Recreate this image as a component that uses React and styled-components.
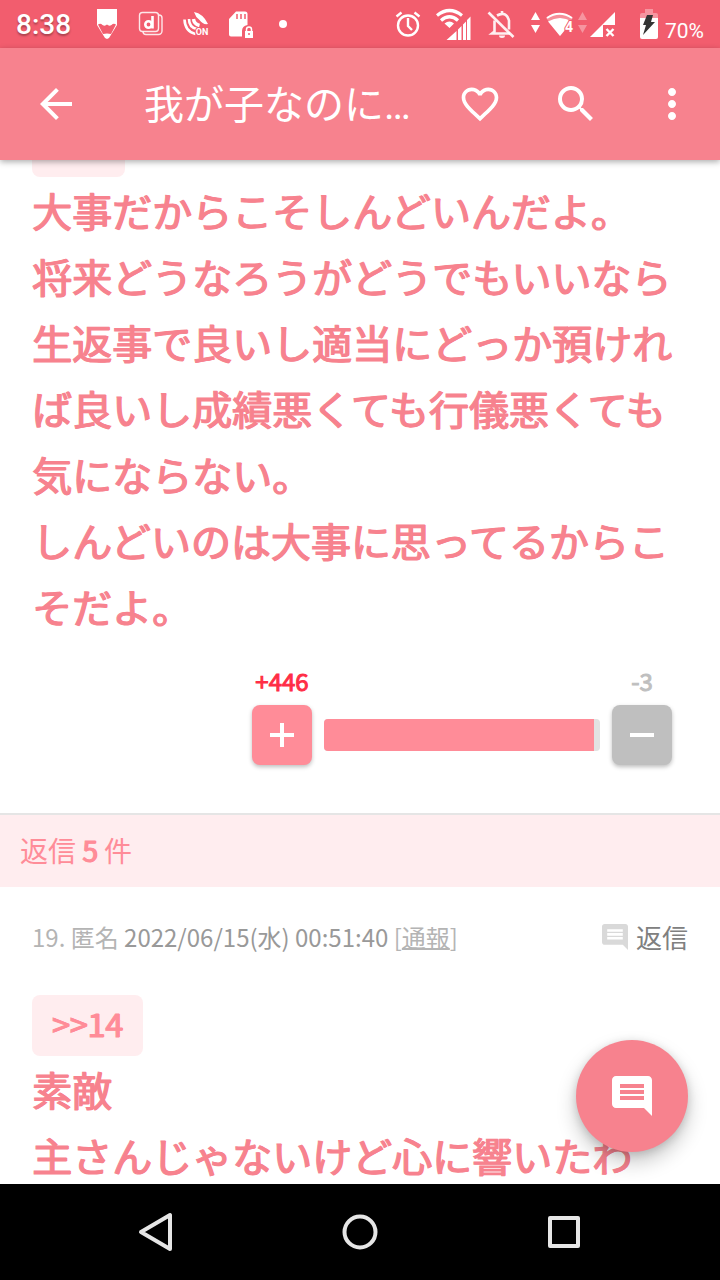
import styled, { createGlobalStyle, css } from "styled-components";
import {
  MdArrowBack,
  MdComment,
  MdFavoriteBorder,
  MdMoreVert,
  MdSearch,
} from "react-icons/md";

const GlobalStyle = createGlobalStyle`
  * {
    box-sizing: border-box;
  }
  body {
    margin: 0;
    background: #fff;
    font-family: "Noto Sans CJK JP", sans-serif;
  }
  button {
    margin: 0;
    padding: 0;
    border: 0;
    background: none;
    color: inherit;
    font: inherit;
    cursor: pointer;
  }
`;

/* thickens the regular weight without changing its widths */
const heavy = css`
  -webkit-text-stroke: 1px;
  text-shadow: 1px 0 0 currentColor;
`;

const Screen = styled.div`
  display: flex;
  flex-direction: column;
  height: 100vh;
`;

/* ---------- status bar ---------- */

const StatusBar = styled.div`
  display: flex;
  align-items: center;
  flex-shrink: 0;
  height: 48px;
  padding: 0 16px;
  background: #f25d6e;
  color: #fff;
  font-family: Roboto, sans-serif;
`;
const Clock = styled.time`
  width: 69px;
  padding-top: 2px;
  font-size: 28px;
  font-weight: 500;
  line-height: 48px;
  text-shadow: 0 2px 2px rgba(0, 0, 0, 0.3);
`;
const StatusGroup = styled.div`
  display: flex;
  margin-right: ${(p) => (p.$push ? "auto" : "0")};
`;
const Glyph = styled.svg`
  display: block;
  width: ${(p) => p.$w}px;
  height: 48px;
  fill: #fff;
`;
const Percent = styled.span`
  padding: 14px 0 0 3px;
  font-size: 21px;
  line-height: 34px;
`;

/* ---------- app bar ---------- */

const AppBar = styled.header`
  position: relative;
  z-index: 1;
  display: flex;
  align-items: center;
  flex-shrink: 0;
  height: 112px;
  background: #f7828e;
  color: #fff;
  box-shadow: 0 2px 6px rgba(0, 0, 0, 0.32);
`;
const IconButton = styled.button`
  display: flex;
  align-items: center;
  justify-content: center;
  flex-shrink: 0;
  width: ${(p) => p.$w || 96}px;
  height: 112px;
`;
const Title = styled.h1`
  flex: 1;
  margin: 0;
  padding: 4px 0 0 32px;
  font-family: Roboto, "Noto Sans CJK JP", sans-serif;
  font-size: 40px;
  font-weight: 400;
  line-height: 60px;
  white-space: nowrap;
`;

/* ---------- thread ---------- */

const Stage = styled.div`
  position: relative;
  flex: 1;
  min-height: 0;
`;
const Feed = styled.main`
  height: 100%;
  overflow: hidden;
`;
const Post = styled.article`
  padding: 0 32px;
`;
const QuoteEdge = styled.div`
  width: 93px;
  height: 17px;
  border-radius: 0 0 8px 8px;
  background: #ffedef;
`;
const Quote = styled.a`
  display: block;
  width: fit-content;
  padding: 0 20px 4px;
  border-radius: 8px;
  background: #ffedef;
  color: #ff8c98;
  font-size: 32px;
  line-height: 57px;
  text-decoration: none;
  ${heavy}
`;
const Body = styled.p`
  margin: 0;
  padding-bottom: 2px;
  color: #f7828e;
  font-size: 40px;
  line-height: 66px;
  ${heavy}
`;
const Votes = styled.div`
  display: grid;
  grid-template-columns: 60px 1fr 60px;
  column-gap: 12px;
  row-gap: 8px;
  align-items: center;
  width: 436px;
  max-width: 100%;
  margin-left: auto;
  padding: 24px 16px 48px 0;
`;
const Count = styled.span`
  color: ${(p) => p.$color};
  font-size: 24px;
  line-height: 32px;
  text-align: center;
  white-space: nowrap;
  -webkit-text-stroke: 1px;
`;
const VoteButton = styled.button`
  display: flex;
  align-items: center;
  justify-content: center;
  width: 60px;
  height: 60px;
  border-radius: 8px;
  background: ${(p) => p.$color};
  box-shadow: 0 2px 4px rgba(0, 0, 0, 0.26);
`;
const Track = styled.div`
  height: 32px;
  border-radius: 4px;
  overflow: hidden;
  background: #e2e2e2;
`;
const Fill = styled.div`
  width: ${(p) => p.$percent}%;
  height: 100%;
  background: #ff8c98;
`;
const ReplyBand = styled.h2`
  margin: 0;
  padding: 0 20px 2px;
  border-top: 2px solid #e5e5e5;
  background: #ffedef;
  color: #ff8c98;
  font-size: 28px;
  font-weight: 400;
  line-height: 70px;
`;
const Strong = styled.span`
  ${heavy}
`;
const Meta = styled.div`
  display: flex;
  align-items: center;
  justify-content: space-between;
  height: 108px;
  padding-bottom: 8px;
  color: #b4b4b4;
  font-size: 24px;
  line-height: 36px;
`;
const Posted = styled.time`
  color: #999;
`;
const Report = styled.a`
  color: inherit;
  text-decoration: underline;
  text-decoration-thickness: 2px;
`;
const ReplyButton = styled.button`
  display: flex;
  align-items: center;
  gap: 8px;
  color: #808080;
  font-size: 26px;

  svg {
    color: #d9d9d9;
  }
`;
const Fab = styled.button`
  position: absolute;
  right: 32px;
  bottom: 32px;
  display: flex;
  align-items: center;
  justify-content: center;
  width: 112px;
  height: 112px;
  border-radius: 50%;
  background: #f7828e;
  color: #fff;
  box-shadow: 0 10px 20px rgba(0, 0, 0, 0.22), 0 2px 8px rgba(0, 0, 0, 0.14);
`;

/* ---------- navigation bar ---------- */

const NavBar = styled.nav`
  display: flex;
  flex-shrink: 0;
  height: 96px;
  padding: 0 54px;
  background: #000;
`;
const NavButton = styled.button`
  display: flex;
  flex: 1;
  align-items: center;
  justify-content: center;

  svg {
    fill: none;
    stroke: #e6e6e6;
    stroke-width: 4;
    stroke-linejoin: round;
  }
`;

const LeftIcons = () => (
  <StatusGroup $push>
    <Glyph $w={44} viewBox="0 0 44 48">
      <path d="M12 9h20v16L24 38l-2 1-2-1-8-13z" />
      <path
        d="M13 24.500q2.500-1.500 4.500 0.500q2.500 1.500 4.500-0.500q2 2 4.500 0.500q2-2 4.500-0.500L26 34q-4-1-8 0z"
        fill="#f25d6e"
      />
    </Glyph>
    <Glyph $w={44} viewBox="0 0 44 48">
      <g fill="none" stroke="#fff" strokeOpacity="0.85" strokeWidth="1.4">
        <rect x="10.500" y="12.500" width="19" height="19" rx="3" />
        <path d="M30 15a3 3 0 0 1 3 3v13a3.500 3.500 0 0 1-3.500 3.500H17a3 3 0 0 1-3-3" />
      </g>
      <g fill="none" stroke="#fff" strokeWidth="2.600">
        <circle cx="19.500" cy="24.500" r="3.200" />
        <path d="M23.500 16v12.500" />
      </g>
    </Glyph>
    <Glyph $w={44} viewBox="0 0 44 48">
      <g fill="none" stroke="#fff" strokeWidth="2.600">
        <path d="M11.500 19.500Q12 31.500 22.500 34" />
        <path d="M16 19Q16 27.500 24 29" />
        <path d="M20.500 19Q21 24 26.500 25.500" strokeWidth="3.400" />
      </g>
      <path d="M21 12q9 1.500 14 12q-5 1-8.500-4q-4-3-5.500-8z" />
      <text
        x="29"
        y="35"
        fontSize="9"
        fontWeight="700"
        textAnchor="middle"
        stroke="#f25d6e"
        strokeWidth="2"
        paintOrder="stroke"
      >
        ON
      </text>
    </Glyph>
    <Glyph $w={44} viewBox="0 0 44 48">
      <path d="M19 11.500h9q2.500 0 2.500 2.500v11q-5.500 1-5.500 6v5.500H14q-2 0-2-2V19z" />
      <path
        d="M20 14v5M24 14v5M28 14v5"
        stroke="#f25d6e"
        strokeWidth="1.5"
      />
      <path d="M28 31h8v7h-8z" />
      <path
        d="M29.500 31v-1.500a2.500 2.500 0 0 1 5 0V31"
        fill="none"
        stroke="#fff"
        strokeWidth="1.5"
      />
      <circle cx="32" cy="34" r="1" fill="#f25d6e" />
    </Glyph>
    <Glyph $w={44} viewBox="0 0 44 48">
      <circle cx="22" cy="24" r="4" />
    </Glyph>
  </StatusGroup>
);

const RightIcons = () => (
  <StatusGroup>
    <Glyph $w={44} viewBox="0 0 44 48">
      <g fill="none" stroke="#fff" strokeWidth="2.4">
        <circle cx="22" cy="25.500" r="10" />
        <path d="M22 18v8l4 4M10.500 16.500l5-4M33.500 16.500l-5-4" />
      </g>
    </Glyph>
    <Glyph $w={48} viewBox="0 0 48 48">
      <g fill="none" stroke="#fff" strokeWidth="3.2">
        <path d="M7 15.500q12.500-10 25 0" />
        <path d="M11 20.500q8.500-7.500 17 0" />
      </g>
      <path d="M14.500 23.500q5-4 9.500 0L19.500 28zM16.500 40L26.500 31v9zM28 29.500l3.500-3.500v14H28zM33 24.500l3-3V40h-3zM37 20l3.500-3.500V40H37z" />
    </Glyph>
    <Glyph $w={44} viewBox="0 0 44 48">
      <g fill="none" stroke="#fff" strokeOpacity="0.9" strokeWidth="2.600">
        <path d="M10.500 12.500l25 24.500" />
        <path d="M16.500 20.500v11l-2.500 2h18M19 15.500q9-5 12 5v9M24 11v3" />
      </g>
      <path d="M21 35.500h6a3 2.500 0 0 1-6 0z" opacity="0.9" />
    </Glyph>
    <Glyph $w={52} viewBox="0 0 52 48">
      <path d="M13.500 12l4.500 8H9zM13.500 33l4.500-8H9z" />
      <path
        d="M25 18q12.500-8.500 25 0"
        fill="none"
        stroke="#fff"
        strokeWidth="2"
      />
      <path d="M24 18q13.500-10 27 0l-4 5-9 13z" opacity="0.3" />
      <path d="M26 21.500q12-7 24 0L38 36z" />
      <text
        x="47"
        y="32"
        fontSize="14"
        fontWeight="700"
        textAnchor="middle"
        stroke="#f25d6e"
        strokeWidth="2"
        paintOrder="stroke"
      >
        4
      </text>
    </Glyph>
    <Glyph $w={56} viewBox="0 0 56 48">
      <path d="M8.500 12l4.500 8H4zM8.500 33l4.500-8H4z" opacity="0.35" />
      <path d="M41 12v13H29v12H16z" />
      <path d="M32.500 29l7 7M39.500 29l-7 7" stroke="#fff" strokeWidth="2.4" />
    </Glyph>
    <Glyph $w={32} viewBox="0 0 32 48">
      <path d="M15 9h8v4h3q2 0 2 2v4H10v-4q0-2 2-2h3z" opacity="0.35" />
      <path d="M10 18h18v19q0 2-2 2H12q-2 0-2-2z" />
      <path d="M17 15h6l-2 7h4L13 35l3-10h-3z" fill="#333" />
    </Glyph>
  </StatusGroup>
);

const App = () => {
  return (
    <Screen>
      <GlobalStyle />
      <StatusBar>
        <Clock>8:38</Clock>
        <LeftIcons />
        <RightIcons />
        <Percent>70%</Percent>
      </StatusBar>

      <AppBar>
        <IconButton $w={112} aria-label="戻る">
          <MdArrowBack size={48} />
        </IconButton>
        <Title>我が子なのに…</Title>
        <IconButton aria-label="お気に入り">
          <MdFavoriteBorder size={44} />
        </IconButton>
        <IconButton aria-label="検索">
          <MdSearch size={48} />
        </IconButton>
        <IconButton aria-label="メニュー">
          <MdMoreVert size={48} />
        </IconButton>
      </AppBar>

      <Stage>
        <Feed>
          <Post>
            <QuoteEdge />
            <Body>
              大事だからこそしんどいんだよ。
              <br />
              将来どうなろうがどうでもいいなら生返事で良いし適当にどっか預ければ良いし成績悪くても行儀悪くても気にならない。
              <br />
              しんどいのは大事に思ってるからこそだよ。
            </Body>
            <Votes>
              <Count $color="#ff2d46">+446</Count>
              <span />
              <Count $color="#bfbfbf">-3</Count>
              <VoteButton $color="#ff8c98" aria-label="プラス">
                <svg width="24" height="24" fill="#fff">
                  <path d="M10 0h4v10h10v4H14v10h-4V14H0v-4h10z" />
                </svg>
              </VoteButton>
              <Track>
                <Fill $percent={98} />
              </Track>
              <VoteButton $color="#bfbfbf" aria-label="マイナス">
                <svg width="24" height="24" fill="#fff">
                  <path d="M0 10h24v4H0z" />
                </svg>
              </VoteButton>
            </Votes>
          </Post>

          <ReplyBand>
            返信 <Strong>5</Strong> 件
          </ReplyBand>

          <Post>
            <Meta>
              <span>
                19. 匿名 <Posted>2022/06/15(水) 00:51:40</Posted> [
                <Report href="#report">通報</Report>]
              </span>
              <ReplyButton>
                <MdComment size={26} viewBox="2 2 20 20" />
                返信
              </ReplyButton>
            </Meta>
            <Quote href="#c14">&gt;&gt;14</Quote>
            <Body>
              素敵
              <br />
              主さんじゃないけど心に響いたわ
            </Body>
          </Post>
        </Feed>
        <Fab aria-label="コメントする">
          <MdComment size={48} />
        </Fab>
      </Stage>

      <NavBar>
        <NavButton aria-label="戻る">
          <svg width="36" height="40">
            <path d="M3 20L32 3v34z" />
          </svg>
        </NavButton>
        <NavButton aria-label="ホーム">
          <svg width="36" height="40">
            <circle cx="18" cy="20" r="15.500" />
          </svg>
        </NavButton>
        <NavButton aria-label="アプリ履歴">
          <svg width="36" height="40">
            <path d="M4 6h28v28H4z" />
          </svg>
        </NavButton>
      </NavBar>
    </Screen>
  );
};

export default App;
